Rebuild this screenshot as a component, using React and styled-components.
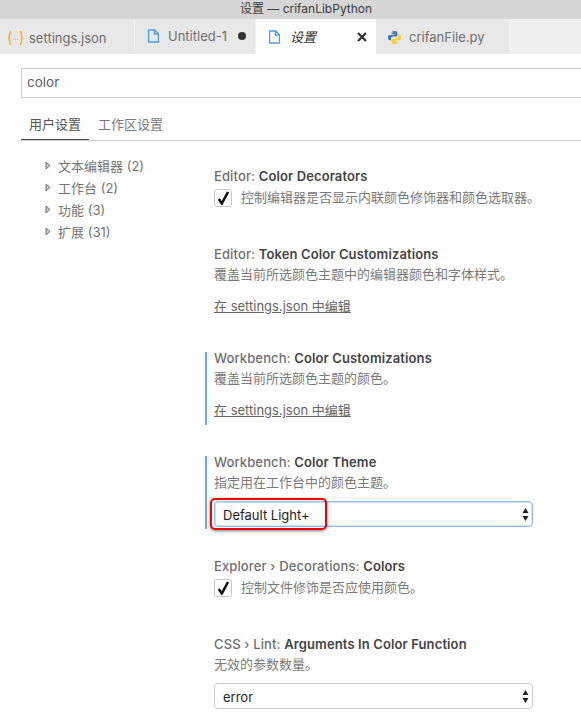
import React from 'react'
import styled, { createGlobalStyle } from 'styled-components'

const Global = createGlobalStyle`
  html, body {
    margin: 0;
    padding: 0;
    background: #fff;
    overflow: hidden;
  }
  body {
    font-family: Inter, "Noto Sans CJK SC", sans-serif;
    font-size: 13px;
    color: #616161;
  }
`

const Page = styled.div`
  width: 581px;
  height: 723px;
  overflow: hidden;
  position: relative;
`

const TitleBar = styled.div`
  height: 19px;
  padding-left: 31px;
  background: #d6d6d6;
  color: #3c3c3c;
  font-size: 12px;
  line-height: 17px;
  text-align: center;
`

const TabBar = styled.div`
  height: 35px;
  display: flex;
  background: #f0f0f0;
`

const Tab = styled.div`
  width: ${props => props.w}px;
  box-sizing: border-box;
  display: flex;
  align-items: center;
  padding-left: ${props => props.pad}px;
  padding-bottom: ${props => props.lift || 0}px;
  padding-top: ${props => props.drop || 0}px;
  background: ${props => (props.active ? '#fff' : '#e8e8e8')};
  border-right: ${props => (props.active ? 'none' : '1px solid #f0f0f0')};
  color: ${props => (props.active ? '#333' : '#6f6f6f')};
  font-size: 13px;
  font-style: ${props => (props.active ? 'italic' : 'normal')};
`

const TabLabel = styled.span`
  margin-left: ${props => props.gap}px;
  white-space: nowrap;
`

const DirtyDot = styled.span`
  width: 8px;
  height: 8px;
  margin-left: 11px;
  border-radius: 50%;
  background: #333;
`

const CloseIcon = styled.svg`
  margin-left: 41px;
  width: 10px;
  height: 10px;
`

const Content = styled.div`
  padding: 14px 0 0 21px;
`

const SearchBox = styled.div`
  width: 600px;
  height: 30px;
  box-sizing: border-box;
  border: 1px solid #cecece;
  padding-left: 5px;
  line-height: 27px;
  font-size: 13.5px;
  color: #616161;
`

const ScopeTabs = styled.div`
  margin-top: 14px;
  width: 600px;
  height: 28px;
  display: flex;
  border-bottom: 1px solid #cccccc;
`

const ScopeTab = styled.div`
  height: 28px;
  box-sizing: border-box;
  padding-left: ${props => (props.active ? 8 : 0)}px;
  margin-right: 9px;
  width: ${props => (props.active ? '68px' : 'auto')};
  line-height: 24px;
  font-size: 13px;
  white-space: nowrap;
  color: ${props => (props.active ? '#555' : '#7a7a7a')};
  border-bottom: ${props => (props.active ? '1px solid #4d4d4d' : 'none')};
`

const Columns = styled.div`
  display: flex;
  padding-top: 13px;
`

const Tree = styled.div`
  width: 184px;
  padding: 0 0 0 24px;
  box-sizing: border-box;
  flex: none;
`

const TreeRow = styled.div`
  height: 22px;
  display: flex;
  align-items: center;
  color: #757575;
  font-size: 13px;
`

const Arrow = styled.svg`
  width: 6px;
  height: 9px;
  margin-right: 7px;
`

const Settings = styled.div`
  flex: 1;
  margin-top: 16px;
`

const Section = styled.div`
  position: relative;
  height: ${props => (props.short ? 47 : 73)}px;
  margin-bottom: 31px;
  padding-left: 9px;
`

const ModifiedBar = styled.div`
  position: absolute;
  left: 0;
  top: 0;
  bottom: 0;
  width: 2px;
  background: #66afe0;
`

const Title = styled.div`
  height: 13px;
  line-height: 13px;
  font-size: 13px;
  font-weight: 500;
  letter-spacing: 0.12px;
  color: #6f6f6f;
  white-space: nowrap;

  & b {
    font-weight: 600;
    color: #444;
  }
`

const Desc = styled.div`
  margin-top: 4px;
  height: 18px;
  line-height: 18px;
  font-size: 13px;
  color: #7a7a7a;
  white-space: nowrap;
`

const CheckRow = styled.div`
  margin-top: 4px;
  display: flex;
  align-items: center;
  height: 18px;
  color: #7a7a7a;
  font-size: 13px;
`

const Box = styled.div`
  width: 16px;
  height: 16px;
  margin: 4px 9px 0 0;
  border: 1px solid #c8c8c8;
  border-radius: 3px;
  display: flex;
  align-items: center;
  justify-content: center;
  flex: none;
`

const EditLink = styled.div`
  margin-top: 14px;
  line-height: 18px;
  font-size: 13px;
  color: #666;
  text-decoration: underline;
`

const Select = styled.div`
  margin-top: 10px;
  width: 319px;
  height: 26px;
  box-sizing: border-box;
  border: 1px solid ${props => (props.focused ? '#8fbce6' : '#cfcfcf')};
  border-radius: 4px;
  box-shadow: ${props => (props.focused ? 'inset 0 0 0 1px #d3e4f5' : 'none')};
  padding: 1px 3px 0 8px;
  display: flex;
  align-items: center;
  justify-content: space-between;
  font-size: 13px;
  color: #222;
`

const Stepper = styled.svg`
  width: 7px;
  height: 13px;
`

const Highlight = styled.div`
  position: absolute;
  left: 210px;
  top: 498px;
  width: 117px;
  height: 32px;
  box-sizing: border-box;
  border: 2px solid #f00000;
  border-radius: 5px;
  box-shadow: 0 1px 3px rgba(0, 0, 0, 0.55);
`

const FileIcon = () => (
  <svg width="13" height="14" viewBox="0 0 13 14" fill="none" stroke="#4a9fe8" strokeWidth="1.3">
    <path d="M1.600 1h6l3.800 3.800V13H1.600z" />
    <path d="M7.400 1v4h4" />
  </svg>
)

const JsonIcon = () => (
  <svg width="17" height="16" viewBox="0 0 17 16" fill="none" stroke="#f5b02e" strokeWidth="1.500">
    <path d="M4.200 1.500C2.600 1.500 2.600 2.800 2.600 5S2.200 8 1 8c1.200 0 1.600.8 1.600 3s0 3.500 1.600 3.500" />
    <path d="M12.800 1.500c1.600 0 1.600 1.300 1.600 3.500s.4 3 1.600 3c-1.200 0-1.600.8-1.600 3s0 3.500-1.600 3.500" />
    <path d="M5.800 9.500h5.400" strokeWidth="1" strokeDasharray="1 1" />
  </svg>
)

const PythonIcon = () => (
  <svg width="15" height="15" viewBox="0 0 16 16">
    <path
      fill="#3c78aa"
      d="M7.900 1C5.600 1 5 2 5 3v1.600h3.100v.6H3C1.700 5.200 1 6.300 1 8s.7 3 2 3h1.200V9.200c0-1.200 1-2.200 2.200-2.200h3c1 0 1.700-.8 1.700-1.800V3c0-1.100-1-2-3.200-2zM6.200 2.100a.6.6 0 1 1 0 1.200.6.6 0 0 1 0-1.200z"
    />
    <path
      fill="#f7ce3e"
      d="M8.100 15c2.300 0 2.900-1 2.900-2v-1.600H7.900v-.6H13c1.300 0 2-1.100 2-2.800s-.7-3-2-3h-1.200v1.800c0 1.200-1 2.200-2.200 2.200h-3C5.600 9 4.900 9.800 4.900 10.800V13c0 1.100 1 2 3.200 2zm1.700-1.100a.6.6 0 1 1 0-1.200.6.6 0 0 1 0 1.200z"
    />
  </svg>
)

const Check = () => (
  <svg width="13" height="14" viewBox="0 0 13 14" fill="none" stroke="#111" strokeWidth="2.600">
    <path d="M1.800 8l3 4.500L11 1" />
  </svg>
)

const Updown = () => (
  <Stepper viewBox="0 0 7 13" fill="#222">
    <path d="M3.500 0L6.500 5H.5zM3.500 13L.5 8h6z" />
  </Stepper>
)

const tree = ['文本编辑器 (2)', '工作台 (2)', '功能 (3)', '扩展 (31)']

const App = () => (
  <Page>
    <Global />
    <TitleBar>设置 — crifanLibPython</TitleBar>
    <TabBar>
      <Tab w={135} pad={7} drop={2}>
        <JsonIcon />
        <TabLabel gap={5}>settings.json</TabLabel>
      </Tab>
      <Tab w={121} pad={12} lift={1}>
        <FileIcon />
        <TabLabel gap={8}>Untitled-1</TabLabel>
        <DirtyDot />
      </Tab>
      <Tab w={120} pad={12} active>
        <FileIcon />
        <TabLabel gap={9}>设置</TabLabel>
        <CloseIcon viewBox="0 0 10 10" stroke="#333" strokeWidth="2.200">
          <path d="M1 1l8 8M9 1l-8 8" />
        </CloseIcon>
      </Tab>
      <Tab w={134} pad={11} drop={1}>
        <PythonIcon />
        <TabLabel gap={7}>crifanFile.py</TabLabel>
      </Tab>
    </TabBar>
    <Content>
      <SearchBox>color</SearchBox>
      <ScopeTabs>
        <ScopeTab active>用户设置</ScopeTab>
        <ScopeTab>工作区设置</ScopeTab>
      </ScopeTabs>
      <Columns>
        <Tree>
          {tree.map(label => (
            <TreeRow key={label}>
              <Arrow viewBox="0 0 6 9" fill="#c4c4c4" stroke="#777" strokeWidth="1">
                <path d="M1 1l4 3.500L1 8z" />
              </Arrow>
              {label}
            </TreeRow>
          ))}
        </Tree>
        <Settings>
          <Section short>
            <Title>Editor: <b>Color Decorators</b></Title>
            <CheckRow>
              <Box><Check /></Box>
              控制编辑器是否显示内联颜色修饰器和颜色选取器。
            </CheckRow>
          </Section>
          <Section>
            <Title>Editor: <b>Token Color Customizations</b></Title>
            <Desc>覆盖当前所选颜色主题中的编辑器颜色和字体样式。</Desc>
            <EditLink>在 settings.json 中编辑</EditLink>
          </Section>
          <Section>
            <ModifiedBar />
            <Title>Workbench: <b>Color Customizations</b></Title>
            <Desc>覆盖当前所选颜色主题的颜色。</Desc>
            <EditLink>在 settings.json 中编辑</EditLink>
          </Section>
          <Section>
            <ModifiedBar />
            <Title>Workbench: <b>Color Theme</b></Title>
            <Desc>指定用在工作台中的颜色主题。</Desc>
            <Select focused>Default Light+<Updown /></Select>
          </Section>
          <Section short>
            <Title>Explorer › Decorations: <b>Colors</b></Title>
            <CheckRow>
              <Box><Check /></Box>
              控制文件修饰是否应使用颜色。
            </CheckRow>
          </Section>
          <Section>
            <Title>CSS › Lint: <b>Arguments In Color Function</b></Title>
            <Desc>无效的参数数量。</Desc>
            <Select>error<Updown /></Select>
          </Section>
        </Settings>
      </Columns>
    </Content>
    <Highlight />
  </Page>
)

export default App
